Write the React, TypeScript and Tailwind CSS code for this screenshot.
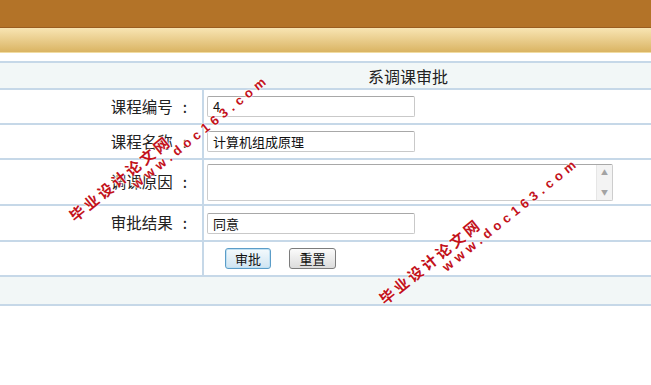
import React from "react";

const rowBorder = "border-b-2 border-[#c6d8e8]";

function Label({ children }: { children: React.ReactNode }) {
  return (
    <div className="flex w-[204px] shrink-0 items-center justify-end border-r-2 border-[#c6d8e8] pr-[15px] text-[15.5px] text-[#222]">
      <span>{children}</span>
      <span className="ml-[10px]">:</span>
    </div>
  );
}

function TextInput({ value }: { value: string }) {
  return (
    <div className="h-[21px] w-[208px] rounded-[2px] border border-[#c9c9c9] border-t-[#a8a8a8] bg-white px-[5px] text-[13px] leading-[19px] text-[#111]">
      {value}
    </div>
  );
}

function Watermark({ className }: { className: string }) {
  return (
    <div className={`pointer-events-none absolute ${className}`}>
      <div className="absolute left-0 top-[29px] origin-left rotate-[-39deg] whitespace-nowrap text-[15px] font-bold leading-none tracking-[3px] text-[#c3121b] [text-shadow:0_0_2px_#fff,0_0_2px_#fff,0_0_1px_#fff]">
        毕业设计论文网
      </div>
      <div className="absolute left-[63px] top-[-2px] origin-left rotate-[-39deg] whitespace-nowrap font-['Liberation_Sans',sans-serif] text-[13px] font-bold leading-none tracking-[4.5px] text-[#c3121b] [text-shadow:0_0_2px_#fff,0_0_2px_#fff,0_0_1px_#fff]">
        www.doc163.com
      </div>
    </div>
  );
}

export default function App() {
  return (
    <div className="relative h-[385px] w-[651px] overflow-hidden bg-white font-['Noto_Sans_CJK_SC',sans-serif]">
      <div className="h-[28px] border-b border-[#9a5d20] bg-[#b37328]" />
      <div className="h-[25px] border-b border-[#f1dca2] bg-gradient-to-b from-[#f8e5b3] to-[#dab462]" />
      <div className="h-[8px]" />

      <div className="w-[816px] border-t-2 border-[#c6d8e8]">
        <div className={`flex h-[27px] items-center justify-center bg-[#f2f7f7] text-[16px] text-[#222] ${rowBorder}`}>
          系调课审批
        </div>

        <div className={`flex h-[35px] ${rowBorder}`}>
          <Label>课程编号</Label>
          <div className="flex items-center pl-[3px]">
            <TextInput value="4" />
          </div>
        </div>

        <div className={`flex h-[35px] ${rowBorder}`}>
          <Label>课程名称</Label>
          <div className="flex items-center pl-[3px]">
            <TextInput value="计算机组成原理" />
          </div>
        </div>

        <div className={`flex h-[46px] ${rowBorder}`}>
          <Label>调课原因</Label>
          <div className="flex items-center pl-[3px]">
            <div className="flex h-[37px] w-[406px] rounded-[2px] border border-[#cdcdcd] border-t-[#a8a8a8] bg-white">
              <div className="flex-1" />
              <div className="flex w-[16px] flex-col items-center justify-between border-l border-[#e6e6e6] bg-[#f3f3f3] py-[4px] text-[7px] leading-none text-[#a3a3a3]">
                <span>▲</span>
                <span>▼</span>
              </div>
            </div>
          </div>
        </div>

        <div className={`flex h-[36px] ${rowBorder}`}>
          <Label>审批结果</Label>
          <div className="flex items-center pl-[3px]">
            <TextInput value="同意" />
          </div>
        </div>

        <div className={`flex h-[35px] ${rowBorder}`}>
          <div className="w-[204px] shrink-0 border-r-2 border-[#c6d8e8]" />
          <div className="flex items-center gap-[18px] pl-[21px]">
            <button className="h-[21px] w-[46px] rounded-[3px] border border-[#5b9dc8] bg-gradient-to-b from-[#f4fafd] to-[#cfe4f1] text-[13px] leading-none text-[#111] shadow-[inset_0_0_0_1px_#bfe0f3]">
              审批
            </button>
            <button className="h-[21px] w-[47px] rounded-[3px] border border-[#7c7c7c] bg-gradient-to-b from-[#fbfbfb] to-[#dcdcdc] text-[13px] leading-none text-[#111]">
              重置
            </button>
          </div>
        </div>

        <div className={`h-[29px] bg-[#f2f7f7] ${rowBorder}`} />
      </div>

      <Watermark className="left-[71px] top-[181px]" />
      <Watermark className="left-[381px] top-[264px]" />
    </div>
  );
}
